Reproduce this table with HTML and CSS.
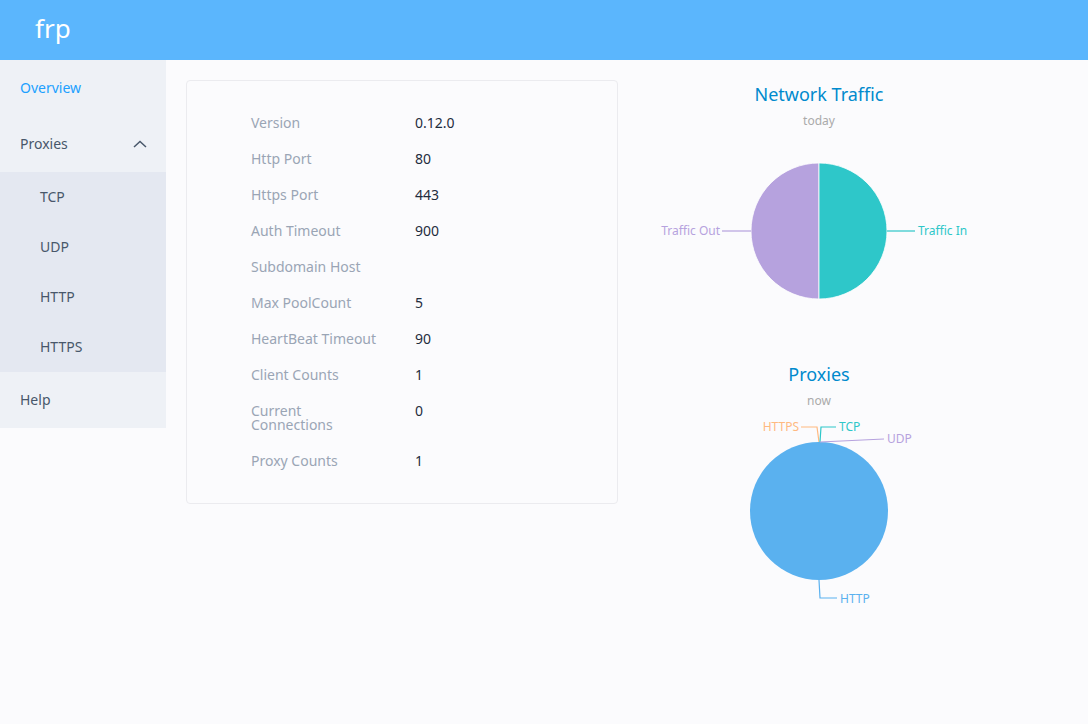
FILE: index.html
```html
<!DOCTYPE html>
<html>
<head>
<meta charset="utf-8">
<title>frp</title>
<link rel="stylesheet" href="styles.css">
</head>
<body>
<header class="topbar"><span class="brand">frp</span></header>
<div class="layout">
  <nav class="sidebar">
    <div class="menu-item active">Overview</div>
    <div class="menu-item submenu-title">
      <span>Proxies</span>
      <svg class="chevron" width="14" height="8" viewBox="0 0 14 8"><path d="M1 7 L7 1.5 L13 7" fill="none" stroke="#48576a" stroke-width="1.5"/></svg>
    </div>
    <div class="submenu">
      <div class="sub-item">TCP</div>
      <div class="sub-item">UDP</div>
      <div class="sub-item">HTTP</div>
      <div class="sub-item">HTTPS</div>
    </div>
    <div class="menu-item">Help</div>
  </nav>
  <main class="content">
    <section class="card">
      <div class="info-grid">
        <div class="label">Version</div><div class="value">0.12.0</div>
        <div class="label">Http Port</div><div class="value">80</div>
        <div class="label">Https Port</div><div class="value">443</div>
        <div class="label">Auth Timeout</div><div class="value">900</div>
        <div class="label">Subdomain Host</div><div class="value"></div>
        <div class="label">Max PoolCount</div><div class="value">5</div>
        <div class="label">HeartBeat Timeout</div><div class="value">90</div>
        <div class="label">Client Counts</div><div class="value">1</div>
        <div class="label">Current Connections</div><div class="value">0</div>
        <div class="label">Proxy Counts</div><div class="value">1</div>
      </div>
    </section>
    <section class="charts">
      <svg class="chart" width="362" height="260" viewBox="0 0 362 260">
        <text x="181" y="25" class="c-title" text-anchor="middle">Network Traffic</text>
        <text x="181" y="49" class="c-sub" text-anchor="middle">today</text>
        <path d="M181 155 L181 87 A68 68 0 0 0 181 223 Z" fill="#b6a2de" stroke="#fff" stroke-width="0.8"/>
        <path d="M181 155 L181 87 A68 68 0 0 1 181 223 Z" fill="#2ec7c9" stroke="#fff" stroke-width="0.8"/>
        <path d="M113 155 L84 155" stroke="#b6a2de" stroke-width="1.2" fill="none"/>
        <path d="M249 155 L277 155" stroke="#2ec7c9" stroke-width="1.2" fill="none"/>
        <text x="82" y="159" class="c-lbl" text-anchor="end" fill="#b6a2de">Traffic Out</text>
        <text x="280" y="159" class="c-lbl" fill="#2ec7c9">Traffic In</text>
      </svg>
      <svg class="chart chart2" width="362" height="265" viewBox="0 0 362 265">
        <text x="181" y="25" class="c-title" text-anchor="middle">Proxies</text>
        <text x="181" y="49" class="c-sub" text-anchor="middle">now</text>
        <circle cx="181" cy="155" r="69" fill="#5ab1ef"/>
        <path d="M181 86 L179 71 L163 71" stroke="#ffb980" stroke-width="1.2" fill="none"/>
        <path d="M182 86 L183 71 L198 71" stroke="#2ec7c9" stroke-width="1.2" fill="none"/>
        <path d="M182 86 L246 83" stroke="#b6a2de" stroke-width="1.2" fill="none"/>
        <path d="M181 224 L182 242 L199 242" stroke="#5ab1ef" stroke-width="1.2" fill="none"/>
        <text x="161" y="75" class="c-lbl" text-anchor="end" fill="#ffb980">HTTPS</text>
        <text x="201" y="75" class="c-lbl" fill="#2ec7c9">TCP</text>
        <text x="249" y="87" class="c-lbl" fill="#b6a2de">UDP</text>
        <text x="202" y="247" class="c-lbl" fill="#5ab1ef">HTTP</text>
      </svg>
    </section>
  </main>
</div>
</body>
</html>
```

FILE: styles.css
```css
html, body {
  margin: 0;
  padding: 0;
}
body {
  width: 1088px;
  height: 724px;
  overflow: hidden;
  background: #fbfbfd;
  font-family: "Noto Sans", "Open Sans", sans-serif;
  font-size: 14px;
}
.topbar {
  height: 60px;
  background: #5bb6fd;
  display: flex;
  align-items: center;
  padding-left: 35px;
  box-sizing: border-box;
}
.brand {
  color: #fff;
  font-size: 26px;
  line-height: 1;
  margin-top: -4px;
}
.layout {
  display: flex;
  align-items: flex-start;
}
.sidebar {
  width: 166px;
  flex: none;
  background: #eef1f6;
}
.menu-item {
  height: 56px;
  line-height: 56px;
  padding-left: 20px;
  color: #48576a;
}
.menu-item.active {
  color: #20a0ff;
}
.submenu-title {
  display: flex;
  align-items: center;
  justify-content: space-between;
  padding-right: 19px;
}
.chevron {
  display: block;
}
.submenu {
  background: #e4e8f1;
}
.sub-item {
  height: 50px;
  line-height: 50px;
  padding-left: 40px;
  color: #48576a;
}
.content {
  flex: 1;
  display: flex;
  align-items: flex-start;
  padding: 20px 0 0 20px;
}
.card {
  width: 432px;
  box-sizing: border-box;
  border: 1px solid #ebebef;
  border-radius: 4px;
  background: #fbfbfd;
  padding: 24px 0 24px 64px;
}
.info-grid {
  display: grid;
  grid-template-columns: 132px 1fr;
  column-gap: 32px;
}
.label, .value {
  padding: 11px 0;
  line-height: 14px;
}
.label {
  color: #9aa5b5;
}
.value {
  color: #1f2d3d;
}
.charts {
  width: 362px;
  margin-left: 20px;
  margin-top: -4px;
  display: flex;
  flex-direction: column;
  gap: 20px;
}
.chart {
  display: block;
}
.c-title {
  font-family: "Noto Sans", sans-serif;
  font-size: 18px;
  fill: #008acd;
}
.c-sub {
  font-family: "Noto Sans", sans-serif;
  font-size: 12px;
  fill: #aaaaaa;
}
.c-lbl {
  font-family: "Noto Sans", sans-serif;
  font-size: 12px;
}
```
